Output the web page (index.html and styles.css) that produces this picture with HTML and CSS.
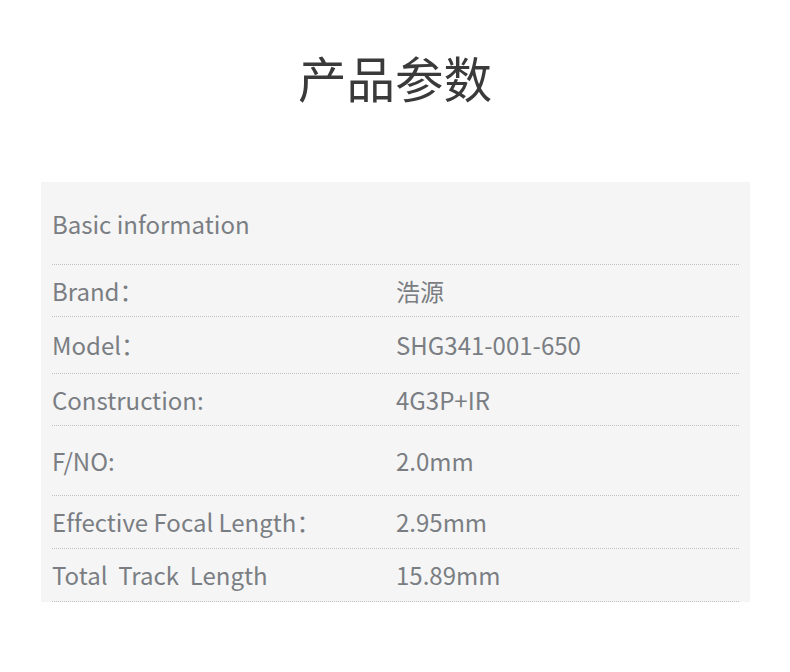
FILE: index.html
```html
<!DOCTYPE html>
<html lang="zh-CN">
<head>
<meta charset="utf-8">
<title>产品参数</title>
<link rel="stylesheet" href="styles.css">
</head>
<body>
<h1 class="title">产品参数</h1>
<section class="panel">
  <div class="head">Basic information</div>
  <div class="row"><span class="label">Brand：</span><span class="value">浩源</span></div>
  <div class="row row-tall"><span class="label">Model：</span><span class="value">SHG341-001-650</span></div>
  <div class="row"><span class="label">Construction:</span><span class="value">4G3P+IR</span></div>
  <div class="row row-xtall"><span class="label">F/NO:</span><span class="value">2.0mm</span></div>
  <div class="row row-mid"><span class="label">Effective Focal Length：</span><span class="value">2.95mm</span></div>
  <div class="row row-mid"><span class="label">Total&nbsp; Track&nbsp; Length</span><span class="value">15.89mm</span></div>
</section>
</body>
</html>
```
FILE: styles.css
```css
* { box-sizing: border-box; }
html, body { margin: 0; padding: 0; background: #fff; }
body {
  font-family: "Noto Sans CJK SC", "Noto Sans", sans-serif;
  font-variant-ligatures: none;
  width: 790px;
}
.title {
  margin: 0;
  padding-top: 47px;
  height: 107px;
  line-height: 60px;
  font-size: 48.5px;
  font-weight: 400;
  color: #3a3a3a;
  text-align: center;
}
.panel {
  margin: 75px 0 0 41px;
  width: 709px;
  background: #f5f5f5;
  padding: 0 11px;
}
.head {
  height: 83px;
  display: flex;
  align-items: center;
  font-size: 24px;
  color: #7a7e83;
  border-bottom: 1px dotted #c0c0c0;
}
.row {
  display: grid;
  grid-template-columns: 344px 1fr;
  align-items: center;
  height: 52px;
  font-size: 24px;
  color: #7a7e83;
  border-bottom: 1px dotted #c0c0c0;
}
.row-tall { height: 57px; }
.row-xtall { height: 70px; }
.row-mid { height: 53px; }
.label, .value { white-space: nowrap; line-height: 30px; }
```
